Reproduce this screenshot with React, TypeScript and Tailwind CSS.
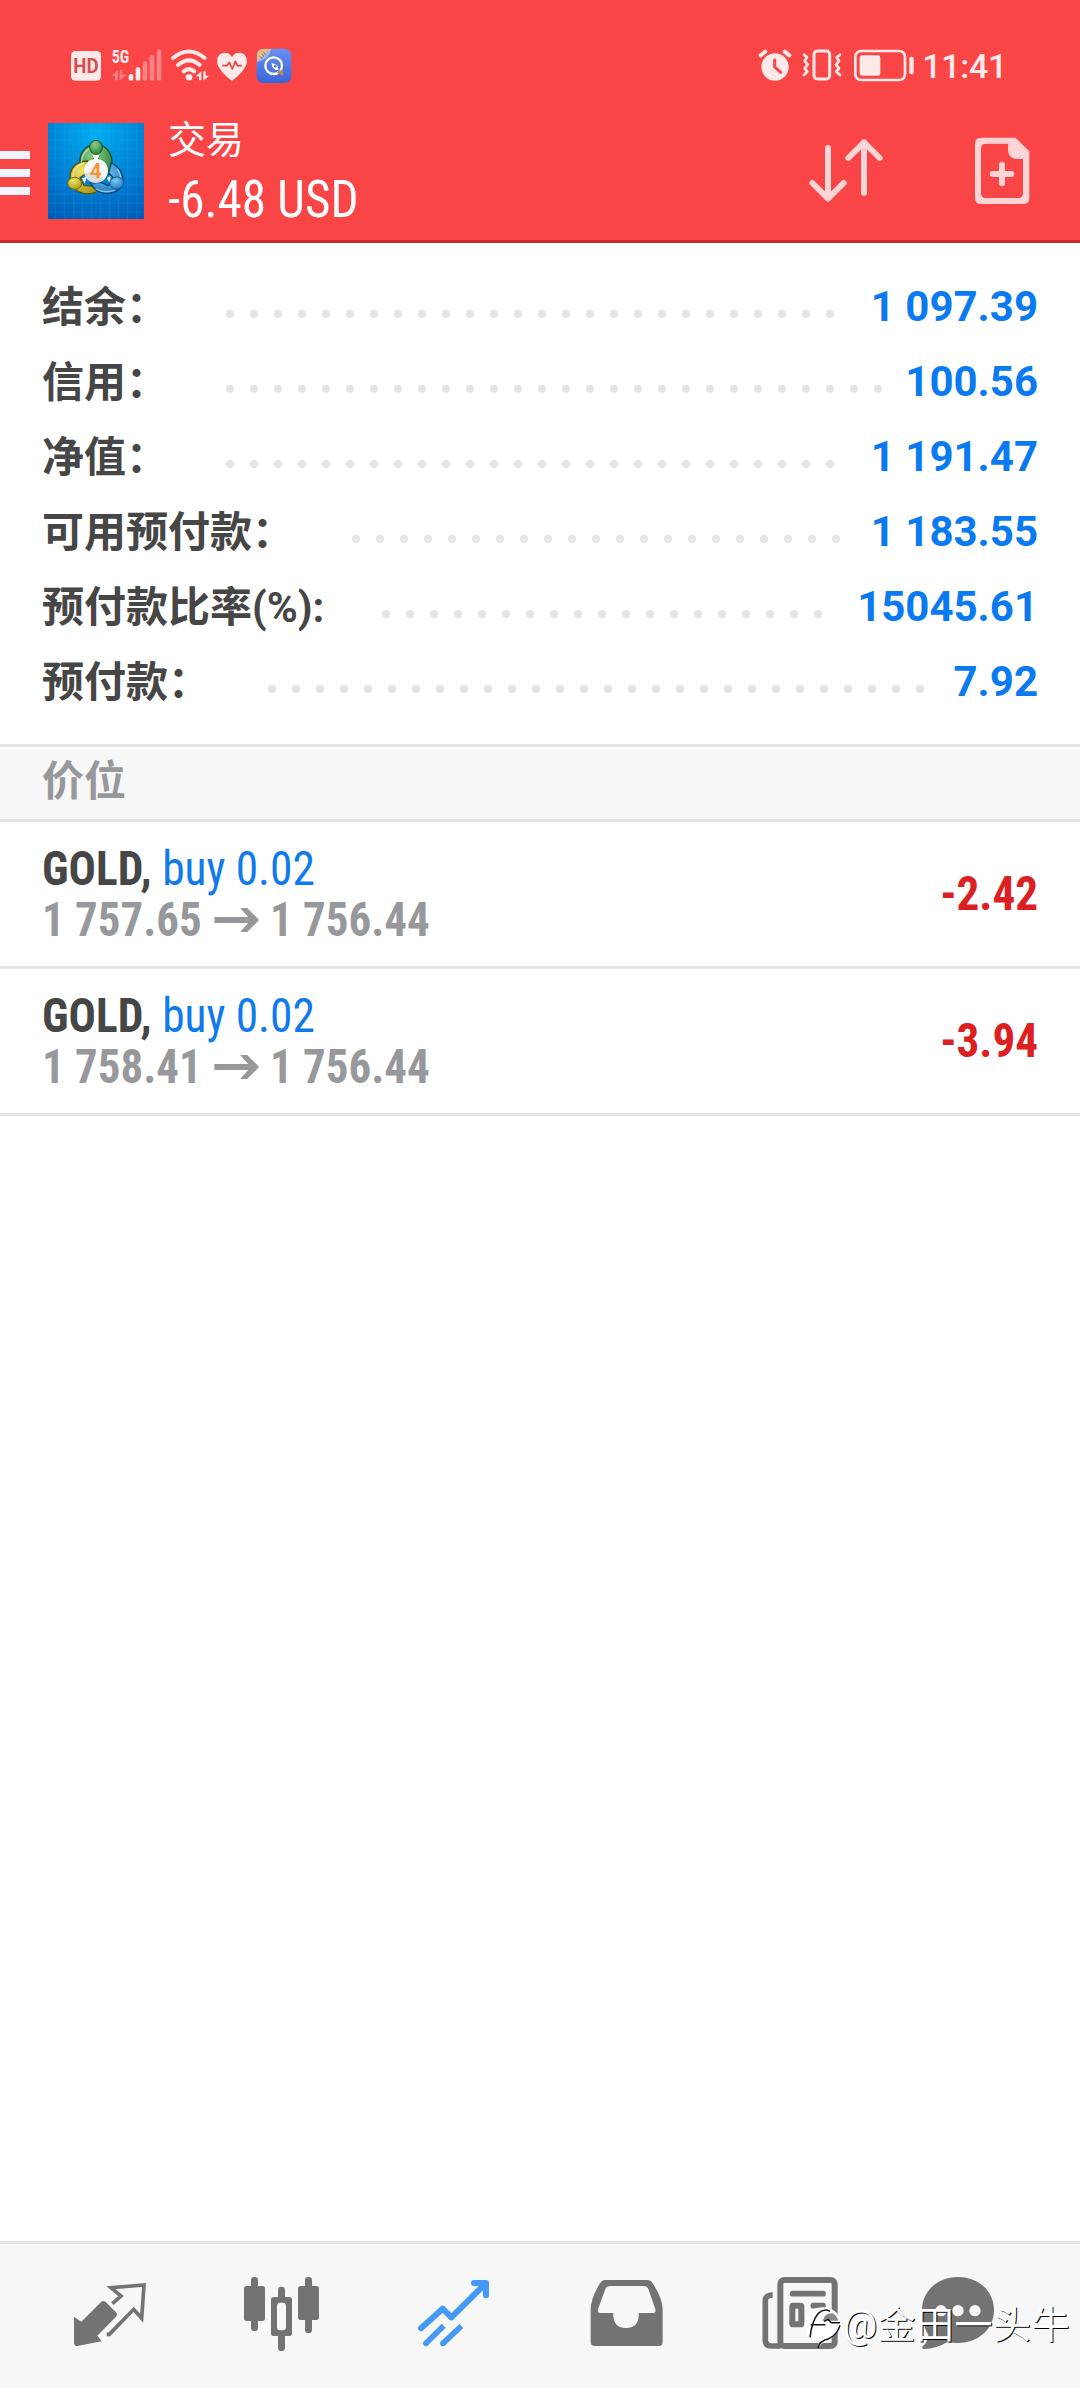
import type { ReactNode } from 'react'
import { clsx } from 'clsx'

const summary = [
  { label: '结余：', value: '1 097.39' },
  { label: '信用：', value: '100.56' },
  { label: '净值：', value: '1 191.47' },
  { label: '可用预付款：', value: '1 183.55' },
  { label: '预付款比率(%):', value: '15045.61' },
  { label: '预付款：', value: '7.92' },
]

const positions = [
  { symbol: 'GOLD', side: 'buy 0.02', open: '1 757.65', current: '1 756.44', profit: '-2.42' },
  { symbol: 'GOLD', side: 'buy 0.02', open: '1 758.41', current: '1 756.44', profit: '-3.94' },
]

const dots = Array.from({ length: 32 }, (_, i) => i)

// --- Status bar ---

function StatusBar() {
  return (
    <div className="flex h-[105px] items-start justify-between pt-10 pr-[73px] pl-[70px] text-[#ffe9e9]">
      <div className="flex">
        <svg viewBox="60 30 96 150" className="h-[50px] w-8">
          <rect x="63" y="63" width="90" height="89" rx="13" fill="currentColor" />
          <text x="108" y="128" textAnchor="middle" textLength="76" lengthAdjust="spacingAndGlyphs" className="fill-[#d94b4d] font-['Roboto'] text-[58px] font-bold">HD</text>
        </svg>
        <svg viewBox="180 30 156 150" className="ml-2 h-[50px] w-[52px]">
          <text x="185" y="99" textLength="53" lengthAdjust="spacingAndGlyphs" className="fill-[#ffe9e9] font-['Roboto_Condensed'] text-[57px] font-bold">5G</text>
          <g fill="currentColor">
            <rect x="236" y="132" width="14" height="20" rx="6" />
            <rect x="257" y="112" width="14" height="40" rx="6" />
          </g>
          <g fill="#ff8285">
            <rect x="278" y="94" width="14" height="58" rx="6" />
            <rect x="299" y="76" width="14" height="76" rx="6" />
            <rect x="320" y="58" width="14" height="94" rx="6" />
            <path d="M186 137 203 120V151H195V137ZM209 120H216V134H231L209 151Z" />
          </g>
        </svg>
        <svg viewBox="360 30 120 150" className="ml-2 h-[50px] w-10">
          <g fill="none" stroke="currentColor" strokeWidth="12" strokeLinecap="round">
            <path d="M369 84Q417 45 464 84" />
            <path d="M384 105Q417 77 449 105" />
            <path d="M401 124Q417 111 433 124" />
          </g>
          <circle cx="417" cy="142" r="10" fill="currentColor" />
          <path d="M437 139 454 124V151H447V139ZM460 124H467V137H477L460 152Z" fill="currentColor" />
        </svg>
        <svg viewBox="498 30 96 150" className="ml-1.5 h-[50px] w-8">
          <path d="M546 152C535 145 501 117 501 93 501 78 512 68 524 68 534 68 542 74 546 81 550 74 558 68 568 68 580 68 591 78 591 93 591 117 557 145 546 152Z" fill="currentColor" />
          <path d="M519 107H531L538 97 547 117 556 94 562 107H573" fill="none" stroke="#e5484a" strokeWidth="5" strokeLinejoin="round" strokeLinecap="round" />
        </svg>
        <svg viewBox="618 30 108 150" className="ml-2 h-[50px] w-9">
          <defs>
            <linearGradient id="quick" x1="0" y1="0" x2="0" y2="1">
              <stop offset="0" stopColor="#6c8ff0" />
              <stop offset="1" stopColor="#3866d9" />
            </linearGradient>
          </defs>
          <rect x="620" y="56" width="104" height="103" rx="20" fill="url(#quick)" />
          <path d="M621 96V76Q621 57 640 57H663Q658 83 621 96Z" fill="#e3bd83" />
          <path d="M626 94Q630 74 660 62 660 86 626 94Z" fill="#9fb2e8" />
          <path d="M630 79 637 86M635 72 642 79M641 66 646 73" stroke="#8b6a3e" strokeWidth="3" />
          <circle cx="671" cy="107" r="25" fill="none" stroke="#fff" strokeWidth="7" />
          <path d="M664 98 682 106 686 121 675 119 667 111Z" fill="#fff" />
          <circle cx="676" cy="109" r="4" fill="#4d74df" />
          <path d="M680 128 689 120 699 124 700 137 690 133Z" fill="#b98a4e" />
        </svg>
      </div>
      <div className="flex">
        <svg viewBox="57 30 102 150" className="h-[50px] w-[34px]">
          <circle cx="108" cy="111" r="41" fill="currentColor" />
          <path d="M65 76 79 65M151 76 137 65" stroke="currentColor" strokeWidth="12" strokeLinecap="round" />
          <path d="M107 90V111L125 127" fill="none" stroke="#f94546" strokeWidth="9" strokeLinecap="round" strokeLinejoin="round" />
        </svg>
        <svg viewBox="186 30 126 150" className="ml-[9px] h-[50px] w-[42px]">
          <g fill="none" stroke="currentColor" strokeWidth="9" strokeLinejoin="round" strokeLinecap="round">
            <rect x="225" y="63" width="47" height="84" rx="10" />
            <path d="M195 74 204 82 197 93 206 104 197 115 205 125 195 135M303 74 293 82 300 93 291 104 300 115 292 125 303 135" strokeWidth="8" />
          </g>
        </svg>
        <svg viewBox="342 30 186 150" className="ml-2.5 h-[50px] w-[62px]">
          <rect x="349" y="63" width="149" height="87" rx="17" fill="none" stroke="currentColor" strokeWidth="8" />
          <rect x="362" y="76" width="62" height="61" rx="7" fill="currentColor" />
          <rect x="511" y="80" width="13" height="53" rx="6" fill="currentColor" />
        </svg>
        <span className="ml-[7px] pt-[6px] text-[34px] leading-10 font-medium tracking-[-0.3px]">11:41</span>
      </div>
    </div>
  )
}

// --- Header ---

function AppLogo() {
  return (
    <svg viewBox="24 24 288 288" className="size-24">
      <defs>
        <radialGradient id="sky" cx=".5" cy=".1" r="1">
          <stop offset="0" stopColor="#00aef0" />
          <stop offset=".5" stopColor="#0083d6" />
          <stop offset="1" stopColor="#005cb8" />
        </radialGradient>
        <radialGradient id="green" cx=".4" cy=".3" r=".8">
          <stop offset="0" stopColor="#8fce84" />
          <stop offset="1" stopColor="#237c35" />
        </radialGradient>
        <radialGradient id="yellow" cx=".4" cy=".3" r=".8">
          <stop offset="0" stopColor="#efe566" />
          <stop offset="1" stopColor="#a89313" />
        </radialGradient>
        <radialGradient id="blue" cx=".4" cy=".3" r=".8">
          <stop offset="0" stopColor="#7cc8f2" />
          <stop offset="1" stopColor="#1673bd" />
        </radialGradient>
      </defs>
      <rect x="24" y="24" width="288" height="288" fill="url(#sky)" />
      <path d="M47 24V312M74 24V312M101 24V312M128 24V312M155 24V312M182 24V312M209 24V312M236 24V312M263 24V312M290 24V312M24 48H312M24 75H312M24 102H312M24 129H312M24 156H312M24 183H312M24 210H312M24 237H312M24 264H312M24 291H312" stroke="#5cc4f4" strokeOpacity=".18" strokeWidth="2" />
      <g strokeWidth="4">
        <path d="M122 158C112 118 134 90 168 88 204 90 228 126 210 174L196 184 186 142 168 126 142 146Z" fill="url(#green)" stroke="#174f2d" />
        <path d="M142 138C106 140 88 160 90 196 98 230 132 244 168 232L174 214 132 212 120 188 142 172Z" fill="url(#yellow)" stroke="#575410" />
        <path d="M214 144C240 156 252 180 248 206 236 238 194 244 164 222L150 204 184 202 204 212 222 190 206 174Z" fill="url(#blue)" stroke="#0e4675" />
      </g>
      <path d="M124 144Q126 106 158 98M98 192Q96 158 132 144M232 162Q244 180 242 196M168 222Q190 236 224 226" fill="none" stroke="#fff" strokeOpacity=".5" strokeWidth="4" />
      <path d="M158 119H178L174 132H162ZM126 190 140 186 134 206ZM201 189 212 183 209 205Z" fill="#fff" />
      <ellipse cx="168" cy="97" rx="19" ry="21" fill="url(#green)" stroke="#174f2d" strokeWidth="3" />
      <ellipse cx="104" cy="205" rx="21" ry="18" fill="url(#yellow)" stroke="#706812" strokeWidth="3" />
      <ellipse cx="230" cy="204" rx="21" ry="18" fill="url(#blue)" stroke="#135b98" strokeWidth="3" />
      <circle cx="168" cy="167" r="36" fill="#f6f6f6" />
      <path d="M133 176Q156 166 181 180L190 195Q158 216 137 185Z" fill="#dcdcdc" />
      <text x="167" y="188" textAnchor="middle" className="fill-[#f5933a] font-['Roboto'] text-[62px] font-bold">4</text>
    </svg>
  )
}

function Header() {
  return (
    <header className="border-b-[3px] border-[#c62a2b] bg-[#f94546]">
      <StatusBar />
      <div className="flex h-[135px] items-start">
        <div className="flex w-[30px] flex-col gap-2.5 pt-[46px]">
          <span className="h-2 bg-[#f4f4ff]" />
          <span className="h-2 bg-[#f4f4ff]" />
          <span className="h-2 bg-[#f4f4ff]" />
        </div>
        <div className="ml-[18px] pt-[18px]">
          <AppLogo />
        </div>
        <div className="ml-6 flex-1 pt-[10px] text-white">
          <div className="text-[38px] leading-[50px]">交易</div>
          <div className="mt-px origin-left scale-x-[0.965] font-['Roboto_Condensed'] text-[51px] leading-[68px]">-6.48 USD</div>
        </div>
        <svg viewBox="84 78 228 204" className="mt-[31px] h-[68px] w-[76px]" fill="none" stroke="#ffd4d6" strokeWidth="18" strokeLinecap="round" strokeLinejoin="round">
          <path d="M144 114V264M97 219 144 266 191 219M252 248V97M205 144 252 97 299 144" />
        </svg>
        <svg viewBox="582 78 168 210" className="mt-[31px] mr-[50px] ml-[90px] h-[70px] w-14">
          <path d="M603 83H706L748 124V264Q748 282 730 282H603Q585 282 585 264V101Q585 83 603 83ZM617 101Q603 101 603 115V250Q603 264 617 264H715Q729 264 729 250V147H711Q684 145 684 119V101Z" fill="#ffd4d6" fillRule="evenodd" />
          <path d="M666 164V220M638 192H694" stroke="#ffd4d6" strokeWidth="18" strokeLinecap="round" />
        </svg>
      </div>
    </header>
  )
}

// --- Account summary ---

function SummaryRow({ label, value }: { label: string; value: string }) {
  return (
    <div className="flex h-[75px] text-[42px] leading-[75px] font-bold">
      <span className="pt-px text-[#464646]">{label}</span>
      <div className="mt-[41px] mr-[18px] ml-[58px] flex h-2 flex-1 flex-wrap gap-4 overflow-hidden">
        {dots.map(i => (
          <span key={i} className="size-2 rounded-full bg-[#e4e4e4]" />
        ))}
      </div>
      <span className="text-[#0a7af3]">{value}</span>
    </div>
  )
}

// --- Positions ---

function PositionRow({ symbol, side, open, current, profit }: (typeof positions)[number]) {
  return (
    <div className="flex h-[147px] items-center justify-between border-b-[3px] border-[#e4e4e4] px-[42px] font-['Roboto_Condensed'] text-[48px] leading-[51px] font-bold">
      <div>
        <div className="origin-left scale-x-[0.945] text-[#464646]">
          {symbol}, <span className="font-normal text-[#0f7aee]">{side}</span>
        </div>
        <div className="flex origin-left scale-x-[0.936] items-center text-[#97989b]">
          {open}
          <svg viewBox="0 0 45 26" preserveAspectRatio="none" className="mr-3 ml-[13px] h-[26px] w-12" fill="currentColor">
            <path d="M0 10H34L26 1H33L45 13 33 25H26L34 16H0Z" />
          </svg>
          {current}
        </div>
      </div>
      <div className="origin-right scale-x-[0.94] pb-0.5 text-[#dc2021]">{profit}</div>
    </div>
  )
}

// --- Bottom tabs ---

function Tab({ viewBox, className, children }: { viewBox: string; className?: string; children: ReactNode }) {
  return (
    <button type="button" className={clsx('flex items-center justify-center', className)}>
      <svg viewBox={viewBox} className="size-[84px]">{children}</svg>
    </button>
  )
}

function TabBar() {
  return (
    <nav className="relative grid h-[147px] grid-cols-6 border-t-[3px] border-[#e4e4e4] bg-[#f7f7f7] px-6 text-[#737373]">
      <Tab viewBox="84 132 252 252">
        <path d="M102 260 124 275 183 216Q190 210 197 216L228 247Q234 254 228 260L172 317 185 334 112 348Q102 348 102 338Z" fill="currentColor" />
        <path d="M217 221 243 198 213 173 312 165 305 265 281 238 208 313H200" fill="none" stroke="currentColor" strokeWidth="11" />
      </Tab>
      <Tab viewBox="600 132 252 252">
        <g fill="currentColor">
          <rect x="612" y="168" width="63" height="105" rx="8" />
          <rect x="633" y="141" width="21" height="162" rx="10" />
          <rect x="774" y="168" width="63" height="102" rx="8" />
          <rect x="795" y="141" width="21" height="168" rx="10" />
          <rect x="714" y="170" width="21" height="193" rx="10" />
          <rect x="693" y="201" width="63" height="117" rx="8" />
        </g>
        <rect x="711" y="218" width="27" height="83" rx="10" fill="#f7f7f7" />
      </Tab>
      <Tab viewBox="1116 132 252 252" className="text-[#4499f7]">
        <path d="M1143 295 1208 236 1234 262 1335 162M1302 159H1338V196" fill="none" stroke="currentColor" strokeWidth="18" strokeLinecap="round" strokeLinejoin="round" />
        <path d="M1158 340 1211 287M1209 340 1264 288" stroke="currentColor" strokeWidth="17" />
        <path d="M1313 159H1338V186Z" fill="currentColor" />
        <circle cx="1158" cy="340" r="8.5" fill="currentColor" />
        <circle cx="1209" cy="340" r="8.5" fill="currentColor" />
      </Tab>
      <Tab viewBox="132 132 252 252">
        <path d="M194 150H322Q332 150 338 160 368 205 368 240V336Q368 348 356 348H164Q152 348 152 336V240Q152 205 180 160 186 150 194 150ZM210 168Q200 168 196 177L174 238Q171 249 182 249H220V258Q222 294 258 294 294 294 296 258V249H337Q349 249 346 238L325 177Q321 168 311 168Z" fill="currentColor" fillRule="evenodd" />
      </Tab>
      <Tab viewBox="18 42 252 252">
        <rect x="91" y="60" width="163" height="198" rx="12" fill="none" stroke="currentColor" strokeWidth="18" />
        <path d="M68 105Q46 105 46 122V240Q46 258 64 258H92" fill="none" stroke="currentColor" strokeWidth="17" />
        <path d="M128 101H219M190 137H219M190 200H219" stroke="currentColor" strokeWidth="17" strokeLinecap="round" />
        <rect x="127" y="137" width="27" height="56" rx="2" fill="none" stroke="currentColor" strokeWidth="18" />
      </Tab>
      <Tab viewBox="498 42 252 252" className="-translate-x-3">
        <path d="M624 51C686 51 732 94 732 150S686 249 624 249Q608 249 591 247 560 266 522 267 514 266 518 259 532 249 535 224 516 197 516 150C516 94 562 51 624 51Z" fill="currentColor" />
        <g fill="#f7f7f7">
          <circle cx="573" cy="152" r="17" />
          <circle cx="624" cy="152" r="17" />
          <circle cx="675" cy="152" r="17" />
        </g>
      </Tab>
      <Watermark />
    </nav>
  )
}

function Watermark() {
  return (
    <div className="absolute top-[55px] right-[10px] flex items-center text-white">
      <svg viewBox="165 143 114 135" className="mt-1.5 h-[45px] w-[38px]">
        <path d="M179 240Q160 222 166 184 178 150 220 150 262 152 270 190 272 232 230 250 214 258 204 272L208 248Q190 246 179 240Z" fill="#fff" />
        <path d="M218 190Q224 166 248 168 262 176 264 190Z" fill="#8a8a8a" />
        <path d="M180 240Q186 190 205 168 222 152 240 162M182 202H226M222 192 234 186 244 196H270M204 272Q208 250 236 244 262 232 270 204" fill="none" stroke="#111" strokeWidth="4.5" />
      </svg>
      <span className="text-[38px] leading-[48px] tracking-[0.5px] [text-shadow:1px_1px_0_#000]">@金田一头牛</span>
    </div>
  )
}

export default function App() {
  return (
    <div className="flex h-[2388px] w-[1080px] flex-col bg-white font-['Roboto','Noto_Sans_CJK_SC',sans-serif]">
      <Header />
      <section className="h-[504px] border-b-[3px] border-[#e4e4e4] px-[42px] pt-[26px]">
        {summary.map(row => (
          <SummaryRow key={row.label} {...row} />
        ))}
      </section>
      <div className="mt-[3px] h-[72px] border-b-[3px] border-[#e4e4e4] bg-[#f7f7f7] px-[42px] text-[42px] leading-[63px] font-bold text-[#97989b]">价位</div>
      <main className="flex-1">
        {positions.map(p => (
          <PositionRow key={p.open} {...p} />
        ))}
      </main>
      <TabBar />
    </div>
  )
}
